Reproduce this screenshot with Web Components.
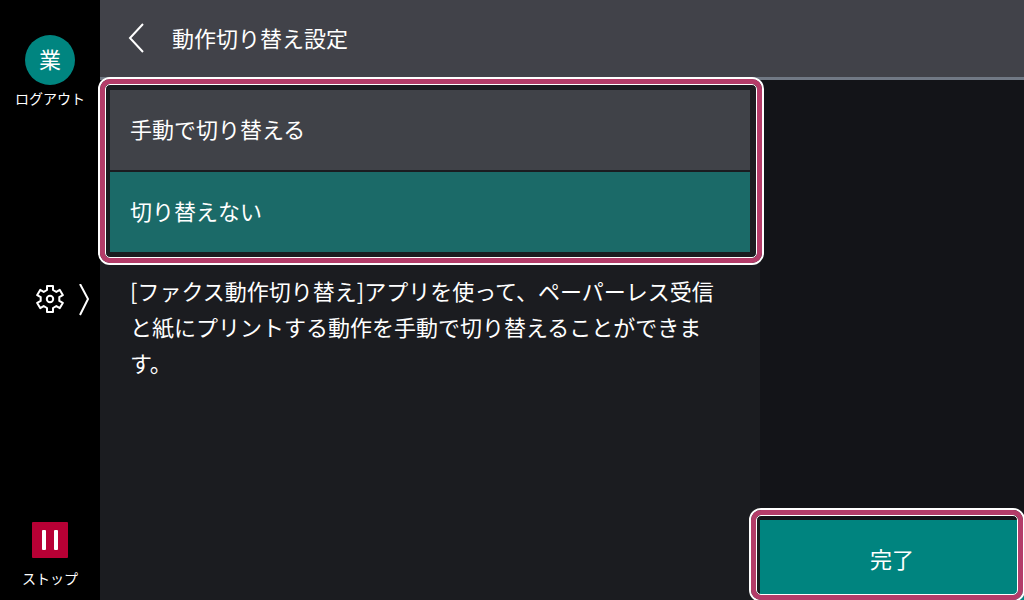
<!DOCTYPE html>
<html lang="ja">
<head>
<meta charset="utf-8">
<meta name="viewport" content="width=device-width, initial-scale=1">
<title>動作切り替え設定</title>
<style>
  body {
    margin: 0;
    background: #000;
    color: #fff;
    font: 22px/36px "Noto Sans CJK JP", sans-serif;
  }
</style>
</head>
<body>
<panel-screen>
  <side-bar slot="side"></side-bar>
  <title-bar slot="head">動作切り替え設定</title-bar>
  <focus-frame class="list">
    <option-list name="mode" label="動作切り替え設定" options="手動で切り替える,切り替えない" selected="1"></option-list>
  </focus-frame>
  <help-text>[ファクス動作切り替え]アプリを使って、ペーパーレス受信と紙にプリントする動作を手動で切り替えることができます。</help-text>
  <focus-frame slot="action" class="done">
    <done-button>完了</done-button>
  </focus-frame>
</panel-screen>

<script>
// small base class: every element only has a markup string
class PanelElement extends HTMLElement {
  constructor() {
    super();
    this.attachShadow({mode: 'open'});
  }
  connectedCallback() {
    const template = document.createElement('template');
    template.innerHTML = this.getTemplate();
    this.shadowRoot.replaceChildren(template.content.cloneNode(true));
  }
}

// Whole screen: side bar, title, settings column, action column
class PanelScreen extends PanelElement {
  getTemplate() {
    return `
    <style>
      :host {
        display: grid;
        grid-template-columns: 100px 1fr;
        min-height: 100vh;
        overflow: clip;
      }
      .page {
        display: flex;
        flex-direction: column;
        min-width: 0;
      }
      .content {
        flex: 1;
        display: grid;
        grid-template-columns: 5fr 2fr;
      }
      main {
        background: #1b1c20;
        padding: 10px;
      }
      aside {
        background: #131418;
        display: flex;
        flex-direction: column;
        justify-content: flex-end;
      }
      ::slotted(.list) {
        --frame-inset: -13px -14px -13px -12px;
      }
      ::slotted(.done) {
        --frame-inset: -12px -1px -2px -11px;
      }
    </style>
    <slot name="side"></slot>
    <div class="page">
      <slot name="head"></slot>
      <div class="content">
        <main><slot></slot></main>
        <aside><slot name="action"></slot></aside>
      </div>
    </div>`;
  }
}
customElements.define('panel-screen', PanelScreen);

// Logout, settings and stop
class SideBar extends PanelElement {
  getTemplate() {
    return `
    <style>
      :host {
        display: grid;
        grid-template-rows: 1fr auto 1fr;
        background: #000;
      }
      button {
        border: 0;
        padding: 0;
        background: none;
        color: inherit;
        font: inherit;
        font-size: 14px;
        line-height: 20px;
        display: flex;
        flex-direction: column;
        align-items: center;
      }
      .logout {
        align-self: start;
        padding-top: 35px;
        gap: 3px;
      }
      .user {
        width: 50px;
        height: 50px;
        border-radius: 50%;
        background: #008580;
        font-size: 22px;
        line-height: 46px;
      }
      .settings {
        display: grid;
        grid-template-columns: 1fr auto 1fr;
        justify-items: end;
      }
      .settings svg:first-child {
        grid-column: 2;
      }
      .settings svg:last-child {
        margin-right: 10px;
      }
      .stop {
        align-self: end;
        padding-bottom: 12px;
        gap: 10px;
      }
      svg {
        display: block;
      }
    </style>
    <button class="logout"><span class="user">業</span>ログアウト</button>
    <button class="settings" aria-label="設定">
      <svg width="28" height="32" viewBox="-14 -15 28 32" fill="none" stroke="#fff" stroke-width="2" stroke-linejoin="round">
        <path d="M-3-9V-13H3V-9L6.3-7.1 9.8-9.1 12.8-3.9 9.3-1.9V1.9L12.8 3.9 9.8 9.1 6.3 7.1 3 9V13H-3V9L-6.3 7.1-9.8 9.1-12.8 3.9-9.3 1.9V-1.9L-12.8-3.9-9.8-9.1-6.3-7.1Z"/>
        <circle r="3.2"/>
      </svg>
      <svg width="12" height="32" viewBox="0 0 12 32" fill="none" stroke="#fff" stroke-width="2">
        <path d="M2 0L10 15 2 31"/>
      </svg>
    </button>
    <button class="stop">
      <svg width="36" height="36" viewBox="0 0 36 36">
        <rect width="36" height="36" rx="1" fill="#b80035"/>
        <rect x="10" y="8" width="4" height="20" rx="1" fill="#fff"/>
        <rect x="22" y="8" width="4" height="20" rx="1" fill="#fff"/>
      </svg>
      ストップ
    </button>`;
  }
}
customElements.define('side-bar', SideBar);

class TitleBar extends PanelElement {
  getTemplate() {
    return `
    <style>
      :host {
        display: flex;
        align-items: center;
        gap: 24px;
        height: 75px;
        padding: 0 24px 2px;
        background: #414249;
        border-bottom: 3px solid #717985;
      }
      button {
        border: 0;
        padding: 0 4px;
        background: none;
      }
      svg {
        display: block;
      }
      h1 {
        margin: 0;
        font: inherit;
        line-height: 32px;
        padding-bottom: 2px;
      }
    </style>
    <button aria-label="戻る">
      <svg width="16" height="30" viewBox="0 0 16 30" fill="none" stroke="#fff" stroke-width="2">
        <path d="M15 1L2 15 15 29"/>
      </svg>
    </button>
    <h1><slot></slot></h1>`;
  }
}
customElements.define('title-bar', TitleBar);

// Outline drawn around whatever is slotted in
class FocusFrame extends PanelElement {
  getTemplate() {
    return `
    <style>
      :host {
        display: block;
        position: relative;
      }
      .ring {
        position: absolute;
        inset: var(--frame-inset, -12px);
        z-index: 1;
        pointer-events: none;
        border: 2px solid #fff;
        border-radius: 12px;
      }
      .ring::before {
        content: "";
        position: absolute;
        inset: 0;
        border: 5px solid #b43c69;
        border-radius: 10px;
      }
      .ring::after {
        content: "";
        position: absolute;
        inset: 5px;
        border: 1px solid #fff;
        border-radius: 5px;
      }
    </style>
    <slot></slot>
    <div class="ring"></div>`;
  }
}
customElements.define('focus-frame', FocusFrame);

// One radio per option, all in the same root so they stay one group
class OptionList extends PanelElement {
  getTemplate() {
    const name = this.getAttribute('name');
    const selected = Number(this.getAttribute('selected'));
    const rows = this.getAttribute('options').split(',').map((text, i) => `
      <label for="${name}${i}">
        <input type="radio" id="${name}${i}" name="${name}" ${i === selected ? 'checked' : ''}>
        ${text}
      </label>`).join('');
    return `
    <style>
      :host {
        display: block;
      }
      fieldset {
        display: grid;
        gap: 2px;
        margin: 0;
        padding: 0;
        border: 0;
      }
      label {
        display: flex;
        align-items: center;
        height: 76px;
        padding: 0 20px 4px;
        background: #404248;
      }
      label:has(:checked) {
        background: #1b6a68;
      }
      input {
        appearance: none;
        margin: 0;
      }
    </style>
    <fieldset aria-label="${this.getAttribute('label')}">${rows}</fieldset>`;
  }
}
customElements.define('option-list', OptionList);

class HelpText extends PanelElement {
  getTemplate() {
    return `
    <style>
      :host {
        display: block;
        padding: 20px 30px 0 20px;
      }
      p {
        margin: 0;
      }
    </style>
    <p><slot></slot></p>`;
  }
}
customElements.define('help-text', HelpText);

class DoneButton extends PanelElement {
  getTemplate() {
    return `
    <style>
      :host {
        display: block;
      }
      button {
        display: block;
        width: 100%;
        height: 80px;
        padding: 0 0 4px;
        border: 0;
        background: #00847f;
        color: inherit;
        font: inherit;
      }
    </style>
    <button><slot></slot></button>`;
  }
}
customElements.define('done-button', DoneButton);
</script>
</body>
</html>
